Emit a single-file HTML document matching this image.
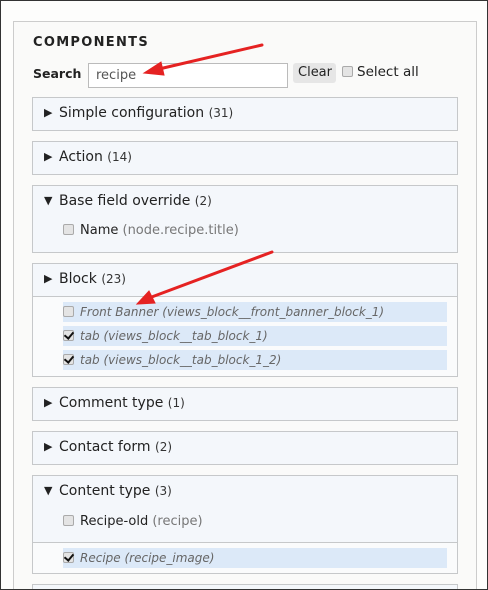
<!DOCTYPE html>
<html style="overflow:hidden;width:488px;height:590px"><head><style>
*{margin:0;padding:0;box-sizing:border-box}
body{width:488px;height:590px;overflow:hidden;background:#fdfdfc;font-family:"DejaVu Sans","Liberation Sans",sans-serif;font-size:13px;color:#222;position:relative;border:1px solid #333;border-bottom:none}
.abs{position:absolute}
.panel{left:12px;top:20px;width:464px;height:569px;border:1px solid #ccc;border-bottom:none;background:#fafaf9}
.box{position:absolute;left:31px;width:426px;border:1px solid #c6c8ca;background:#f4f7fb}
.hd{position:absolute;left:11px;top:7px;font-size:14px;color:#222}
.tri{display:inline-block;width:15px;font-size:11px;vertical-align:1px}
.cnt{font-size:12px;color:#333}
.cb{display:inline-block;width:11px;height:11px;border:1px solid #aaa;background:#e4e4e4;border-radius:2px;vertical-align:-1px;margin-right:6px;position:relative}
.cb.on::after{content:"";position:absolute;left:2px;top:-1px;width:4px;height:7px;border:solid #111;border-width:0 2px 2px 0;transform:rotate(40deg)}
.row{position:absolute;left:30px;width:384px;height:20px;background:#dce9f8;font-style:italic;color:#666;padding:3px 0 0 0;font-size:12px}
.item{position:absolute;left:30px;font-size:13px}
.g{color:#777}
</style></head><body>
<div class="abs panel"></div>
<div class="abs" style="left:32px;top:34px;font-weight:bold;letter-spacing:1.3px;font-size:13px">COMPONENTS</div>
<div class="abs" style="left:32px;top:65px;font-weight:bold;font-size:12.5px">Search</div>
<div class="abs" style="left:87px;top:62px;width:200px;height:25px;border:1px solid #bbb;background:#fff;padding:4px 0 0 7px;color:#555;font-size:13px">recipe</div>
<div class="abs" style="left:292px;top:62px;width:43px;height:20px;background:#e6e6e6;border-radius:3px;padding:2px 0 0 5px;font-size:13px">Clear</div>
<div class="abs" style="left:341px;top:63px;font-size:13.5px"><span class="cb" style="margin-right:4px"></span>Select all</div>

<div class="box" style="top:96px;height:34px"><div class="hd"><span class="tri">▶</span>Simple configuration <span class="cnt">(31)</span></div></div>
<div class="box" style="top:140px;height:34px"><div class="hd"><span class="tri">▶</span>Action <span class="cnt">(14)</span></div></div>
<div class="box" style="top:184px;height:68px"><div class="hd"><span class="tri">▼</span>Base field override <span class="cnt">(2)</span></div>
<div class="item" style="top:37px"><span class="cb"></span>Name <span class="g">(node.recipe.title)</span></div></div>
<div class="box" style="top:262px;height:114px;background:#fafbfc"><div style="position:absolute;left:0;top:0;width:424px;height:33px;background:#f4f7fb;border-bottom:1px solid #c6c8ca"></div><div class="hd"><span class="tri">▶</span>Block <span class="cnt">(23)</span></div>
<div class="row" style="top:38px"><span class="cb"></span>Front Banner (views_block__front_banner_block_1)</div>
<div class="row" style="top:62px"><span class="cb on"></span>tab (views_block__tab_block_1)</div>
<div class="row" style="top:86px"><span class="cb on"></span>tab (views_block__tab_block_1_2)</div></div>
<div class="box" style="top:386px;height:34px"><div class="hd"><span class="tri">▶</span>Comment type <span class="cnt">(1)</span></div></div>
<div class="box" style="top:430px;height:34px"><div class="hd"><span class="tri">▶</span>Contact form <span class="cnt">(2)</span></div></div>
<div class="box" style="top:474px;height:99px;background:#fafbfc"><div style="position:absolute;left:0;top:0;width:424px;height:67px;background:#f4f7fb;border-bottom:1px solid #c6c8ca"></div><div class="hd"><span class="tri">▼</span>Content type <span class="cnt">(3)</span></div>
<div class="item" style="top:38px"><span class="cb"></span>Recipe-old <span class="g">(recipe)</span></div>
<div class="row" style="top:72px"><span class="cb on"></span>Recipe (recipe_image)</div></div>
<div class="abs" style="left:31px;top:583px;width:426px;height:5px;border:1px solid #c6c8ca;border-bottom:none;background:#f4f7fb"></div>
<div class="abs" style="left:0;top:588px;width:488px;height:2px;background:#333"></div>

<svg class="abs" style="left:0;top:0" width="488" height="590">
<g stroke="#e52222" stroke-width="3" fill="#e52222" stroke-linecap="round">
<line x1="261" y1="44" x2="158" y2="68"/><polygon points="143,72 160,61 163,74" stroke-width="1"/>
<line x1="271" y1="251" x2="148" y2="297"/><polygon points="136,303 148,290 154,302" stroke-width="1"/>
</g></svg>
</body></html>
